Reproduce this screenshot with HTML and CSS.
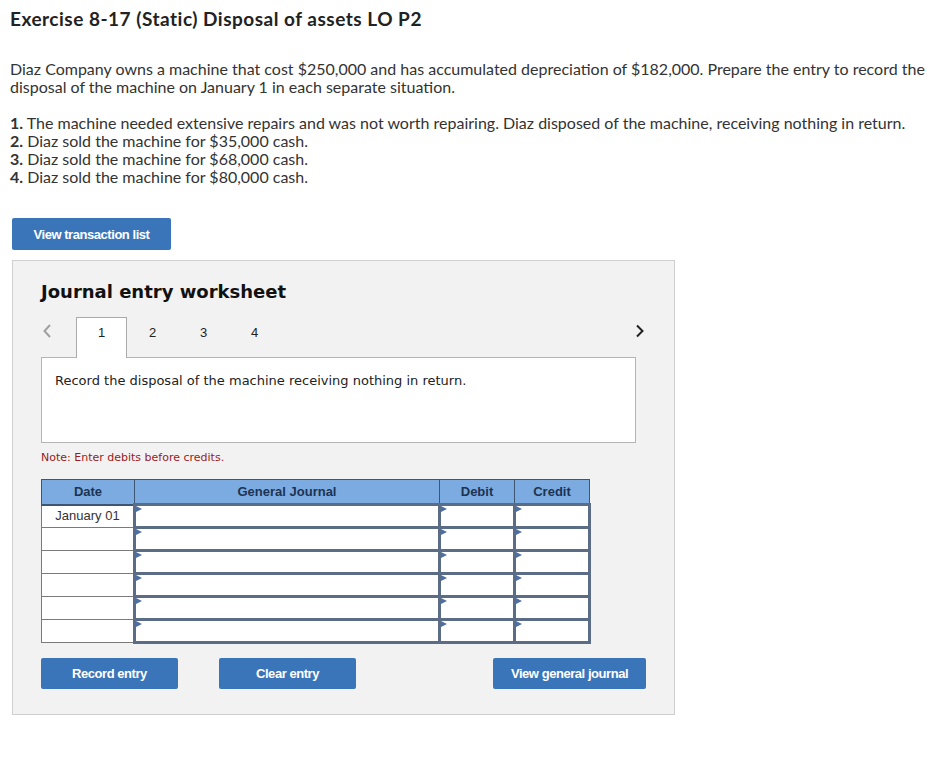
FILE: index.html
```html
<!DOCTYPE html>
<html lang="en">
  <head>
    <meta charset="UTF-8" />
    <meta name="viewport" content="width=device-width, initial-scale=1.0" />
    <title>Exercise 8-17</title>
    <link rel="stylesheet" href="styles.css">
  </head>
  <body>
    <div class="page">
      <h1 class="title">Exercise 8-17 (Static) Disposal of assets LO P2</h1>

      <p class="intro">
        Diaz Company owns a machine that cost $250,000 and has accumulated depreciation of $182,000. Prepare the entry to record the
        disposal of the machine on January 1 in each separate situation.
      </p>

      <ol class="cases">
        <li><b>1.</b> The machine needed extensive repairs and was not worth repairing. Diaz disposed of the machine, receiving nothing in return.</li>
        <li><b>2.</b> Diaz sold the machine for $35,000 cash.</li>
        <li><b>3.</b> Diaz sold the machine for $68,000 cash.</li>
        <li><b>4.</b> Diaz sold the machine for $80,000 cash.</li>
      </ol>

      <button class="btn btn-list">View transaction list</button>

      <div class="worksheet">
        <h2 class="ws-title">Journal entry worksheet</h2>

        <div class="tabs">
          <span class="arrow prev">
            <svg width="10" height="16" viewBox="0 0 10 16"><path d="M8 2 L2.5 8 L8 14" fill="none" stroke="#a0a0a0" stroke-width="2"/></svg>
          </span>
          <div class="tab active">1</div>
          <div class="tab">2</div>
          <div class="tab">3</div>
          <div class="tab">4</div>
          <span class="arrow next">
            <svg width="10" height="16" viewBox="0 0 10 16"><path d="M2 2.5 L7.5 8 L2 13.5" fill="none" stroke="#222" stroke-width="2"/></svg>
          </span>
        </div>

        <div class="task">Record the disposal of the machine receiving nothing in return.</div>

        <p class="note">Note: Enter debits before credits.</p>

        <table class="journal">
          <thead>
            <tr>
              <th class="c-date">Date</th>
              <th class="c-acct">General Journal</th>
              <th class="c-num">Debit</th>
              <th class="c-num">Credit</th>
            </tr>
          </thead>
          <tbody>
            <tr>
              <td class="date">January 01</td>
              <td class="field"></td>
              <td class="field"></td>
              <td class="field"></td>
            </tr>
            <tr>
              <td class="date"></td>
              <td class="field"></td>
              <td class="field"></td>
              <td class="field"></td>
            </tr>
            <tr>
              <td class="date"></td>
              <td class="field"></td>
              <td class="field"></td>
              <td class="field"></td>
            </tr>
            <tr>
              <td class="date"></td>
              <td class="field"></td>
              <td class="field"></td>
              <td class="field"></td>
            </tr>
            <tr>
              <td class="date"></td>
              <td class="field"></td>
              <td class="field"></td>
              <td class="field"></td>
            </tr>
            <tr>
              <td class="date"></td>
              <td class="field"></td>
              <td class="field"></td>
              <td class="field"></td>
            </tr>
          </tbody>
        </table>

        <div class="actions">
          <button class="btn btn-record">Record entry</button>
          <button class="btn btn-clear">Clear entry</button>
          <button class="btn btn-view">View general journal</button>
        </div>
      </div>
    </div>
  </body>
</html>
```

FILE: styles.css
```css
:root {
  --btn-blue: #3a75ba;
  --cell-border: #5b6d86;
}

* {
  padding: 0;
  margin: 0;
  box-sizing: border-box;
}

body {
  background: #fff;
  color: #222;
  font-family: Lato, "Liberation Sans", sans-serif;
}

.page {
  padding: 8px 0 0 10px;
}

.title {
  font-size: 19px;
  line-height: 22px;
  font-weight: 700;
  letter-spacing: 0.5px;
  color: #222;
}

.intro {
  margin-top: 30px;
  font-size: 16px;
  line-height: 18px;
  color: #333;
  width: 930px;
}

.cases {
  list-style: none;
  margin-top: 18px;
  font-size: 16px;
  line-height: 18px;
  color: #333;
}

.cases b {
  font-weight: 700;
}

.btn {
  display: block;
  border: none;
  border-radius: 2px;
  background: var(--btn-blue);
  color: #fff;
  font-family: "Liberation Sans", Arial, sans-serif;
  font-weight: 700;
  font-size: 13px;
  letter-spacing: -0.45px;
  height: 32px;
}

.btn-list {
  margin: 32px 0 0 2px;
  width: 159px;
}

.worksheet {
  margin: 10px 0 0 2px;
  width: 663px;
  height: 455px;
  background: #f2f2f2;
  border: 1px solid #cfcfcf;
  padding: 20px 38px 0 28px;
}

.ws-title {
  font-family: "DejaVu Sans", Verdana, sans-serif;
  font-size: 18px;
  line-height: 22px;
  font-weight: 700;
  color: #111;
}

.tabs {
  display: flex;
  align-items: flex-start;
  margin-top: 14px;
  margin-right: -9px;
  height: 40px;
  position: relative;
  z-index: 1;
}

.arrow {
  display: flex;
  align-items: center;
  margin-top: 6px;
}

.arrow.prev {
  width: 35px;
  padding-left: 1px;
}

.arrow.next {
  margin-left: auto;
}

.tab {
  width: 51px;
  height: 40px;
  display: flex;
  justify-content: center;
  font-family: "Liberation Sans", Arial, sans-serif;
  font-size: 13px;
  line-height: 16px;
  color: #222;
  padding-top: 8px;
}

.tab.active {
  background: #fff;
  border: 1px solid #aaa;
  border-bottom: none;
  height: 41px;
  margin-bottom: -1px;
  padding-top: 7px;
}

.task {
  height: 86px;
  background: #fff;
  border: 1px solid #b4b4b4;
  padding: 14px 13px;
  font-family: "DejaVu Sans", Verdana, sans-serif;
  font-size: 13px;
  line-height: 18px;
  color: #222;
}

.note {
  margin-top: 8px;
  font-family: "DejaVu Sans", Verdana, sans-serif;
  font-size: 11px;
  line-height: 14px;
  color: #9a1b1b;
}

.journal {
  margin-top: 14px;
  border-collapse: collapse;
  font-family: "Liberation Sans", Arial, sans-serif;
  font-size: 13px;
}

.journal th {
  height: 25px;
  background: #7cabe1;
  color: #1c3352;
  font-weight: 700;
  border: 1px solid #3f5672;
  border-bottom: 2px solid #3f5672;
  text-align: center;
}

.c-date { width: 93px; }
.c-acct { width: 305px; }
.c-num { width: 75px; }

.journal td {
  height: 23px;
  background: #fff;
}

.journal td.date {
  border: 1px solid #7a7a7a;
  text-align: center;
  color: #333;
  padding-bottom: 2px;
}

.journal td.field {
  position: relative;
  border: 3px solid var(--cell-border);
}

.journal td.field::before {
  content: '';
  position: absolute;
  top: 0;
  left: 0;
  border-top: 3px solid transparent;
  border-bottom: 3px solid transparent;
  border-left: 6px solid #4d6fa3;
}

.actions {
  display: flex;
  margin-top: 14px;
  margin-right: -10px;
}

.actions .btn {
  height: 31px;
}

.btn-record {
  width: 137px;
}

.btn-clear {
  width: 137px;
  margin-left: 41px;
}

.btn-view {
  width: 153px;
  margin-left: auto;
}
```
